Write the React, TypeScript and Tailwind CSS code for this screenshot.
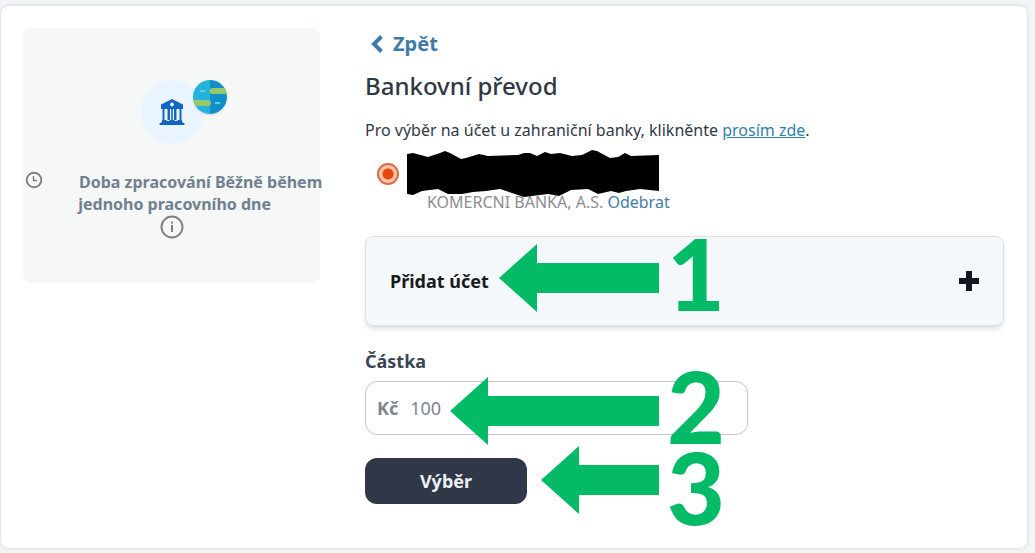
import { useState } from "react";

const Arrow = ({ width }: { width: number }) => (
  <svg width={width} height={68} viewBox={`0 0 ${width} 68`} fill="#03bb66" aria-hidden="true">
    <path d={`M0 34L38 0V19H${width}V49H38V68Z`} />
  </svg>
);

const Step = ({
  width,
  label,
  className,
  labelClassName = "-mt-2",
}: {
  width: number;
  label: string;
  className: string;
  labelClassName?: string;
}) => (
  <div className={`pointer-events-none absolute z-10 flex items-start ${className}`}>
    <Arrow width={width} />
    <span
      className={`pl-2 font-['Lato',sans-serif] text-[100px] leading-[72px] font-black text-[#03bb66] ${labelClassName}`}
    >
      {label}
    </span>
  </div>
);

const BankIcon = () => (
  <svg width="28" height="28" viewBox="0 0 28 28" fill="#1266bd" aria-hidden="true">
    <path
      fillRule="evenodd"
      d="M14 1L25 6.5V11H3V6.5ZM14 4.6a1.9 1.9 0 1 0 0 3.8a1.9 1.9 0 1 0 0-3.8Z"
    />
    <path d="M4.500 11h2v11h-2zM9.500 11h2.500v11h-2.500zM16 11h2.500v11h-2.500zM21.500 11h2v11h-2zM13.200 11h1.600v11h-1.600z" />
    <path d="M4 22h4l1 1h2l1-1h4l1 1h2l1-1h4v2l2.500 1.500V27H1.500v-1.500l2.500-1.500z" />
  </svg>
);

const GlobeIcon = () => (
  <svg width="34" height="34" viewBox="0 0 34 34" aria-hidden="true">
    <defs>
      <clipPath id="globe">
        <circle cx="17" cy="17" r="17" />
      </clipPath>
    </defs>
    <g clipPath="url(#globe)">
      <path fill="#25b3db" d="M0 0h17v34H0z" />
      <path fill="#128fc8" d="M17 0h17v34H17z" />
      <path fill="#93c96b" d="M19 8h15v6H20a3 3 0 0 1-1-6zM0 20h15a3 3 0 0 1 0 6H0z" />
      <path fill="#62cbe5" d="M7 10h5v2H7zM22 22h5v2h-5z" />
    </g>
  </svg>
);

const ClockIcon = () => (
  <svg width="18" height="18" viewBox="0 0 18 18" fill="none" stroke="#7d7f81" aria-hidden="true">
    <circle cx="9" cy="9" r="7.300" strokeWidth="1.900" />
    <path d="M8.500 5v4.500h3.500" strokeWidth="1.400" />
  </svg>
);

const InfoIcon = () => (
  <svg width="24" height="24" viewBox="0 0 24 24" fill="none" stroke="#7d7f81" aria-hidden="true">
    <circle cx="12" cy="12" r="10.500" strokeWidth="1.900" />
    <path d="M12 10v7M12 6.500v2" strokeWidth="2" />
  </svg>
);

const App = () => {
  const [amount, setAmount] = useState("100");

  return (
    <div className="min-h-screen bg-[#f2f4f5] pt-[6px] pr-2 pb-[5px] pl-px font-['Noto_Sans',sans-serif] text-[#303846]">
      <main className="flex items-start gap-[45px] rounded-lg bg-white pt-[22px] pr-[23px] pb-11 pl-[22px] shadow-[0_0_3px_1px_#dde1e2]">
        <aside className="flex h-[255px] w-[297px] shrink-0 flex-col items-center rounded-lg bg-[#f6f7f7] pt-[52px]">
          <div className="relative flex size-16 items-center justify-center rounded-full bg-[#eaf4ff]">
            <BankIcon />
            <span className="absolute top-0 left-[53px] rounded-full shadow-sm">
              <GlobeIcon />
            </span>
          </div>
          <div className="mt-[27px] flex w-full text-base leading-[22px] font-bold text-[#708090]">
            <span className="w-10 shrink-0 pl-[2px]">
              <ClockIcon />
            </span>
            <p className="-mr-10 flex-1 pr-11 text-center">
              <span className="pl-4 whitespace-nowrap">Doba zpracování Běžně během</span>
              <span className="block pr-9">jednoho pracovního dne</span>
            </p>
          </div>
          <button type="button" aria-label="Info">
            <InfoIcon />
          </button>
        </aside>

        <section className="flex min-w-0 flex-1 flex-col items-start">
          <a href="#" className="flex items-center gap-2 pl-1 text-xl leading-8 font-bold text-[#3d7aa8]">
            <svg width="16" height="20" viewBox="0 0 16 20" fill="none" aria-hidden="true">
              <path d="M12.500 2.500L5 10l7.500 7.500" stroke="currentColor" strokeWidth="4" />
            </svg>
            Zpět
          </a>
          <h1 className="mt-2 text-2xl leading-9 font-medium">Bankovní převod</h1>
          <p className="mt-[14px] text-base leading-6 whitespace-nowrap">
            Pro výběr na účet u zahraniční banky, klikněnte{" "}
            <a href="#" className="text-[#3180ad] underline">
              prosím zde
            </a>
            .
          </p>

          <div className="relative mt-1 flex h-14 items-center pl-3">
            <input
              type="radio"
              name="account"
              aria-label="KOMERCNI BANKA, A.S."
              defaultChecked
              className="size-[22px] appearance-none rounded-full border-2 border-[#dd6b4d] bg-[radial-gradient(circle,#ed4510_0_5px,#ffc6a2_6px)]"
            />
            <svg className="absolute left-[41px] z-10" width="254" height="48" viewBox="0 0 254 48" aria-hidden="true">
              <path d="M1 4L7 3 22 7 34 3 39 1 44 3 55 9 60 8 73 4 82 6 112 5 118 3 124 3 131 6 139 2 145 4 154 3 166 6 176 5 186 0 191 1 204 8 212 7 219 3 225 6 253 5V41L234 39 220 41 213 43 205 41 192 44 182 39 165 40 153 46 142 44 118 47 106 43 94 39 80 41 67 42 56 44 42 44 32 39 16 41 7 45 1 44Z" />
            </svg>
          </div>
          <p className="-mt-3 pl-[62px] text-base leading-6 text-[#8b8d91]">
            KOMERCNI BANKA, A.S.{" "}
            <a href="#" className="text-[#437da5]">
              Odebrat
            </a>
          </p>

          <div className="relative mt-[22px] w-full">
            <button
              type="button"
              className="flex h-[90px] w-full items-center justify-between rounded-lg border border-[#dfe1e5] bg-[#f5f8fa] px-6 text-lg font-bold text-[#171b22] shadow-md"
            >
              Přidat účet
              <svg width="20" height="20" viewBox="0 0 20 20" aria-hidden="true">
                <path d="M10 0v20M0 10h20" stroke="#141820" strokeWidth="6" />
              </svg>
            </button>
            <Step width={160} label="1" className="top-2 left-[134px]" />
          </div>

          <label htmlFor="amount" className="mt-[23px] text-lg leading-6 font-bold text-[#3a4554]">
            Částka
          </label>
          <div className="relative mt-2 w-[383px] max-w-full">
            <div className="flex h-[54px] items-center gap-3 rounded-xl border border-[#c3c5c8] px-[11px] text-lg text-[#7d8490]">
              <span className="font-bold">Kč</span>
              <input
                id="amount"
                value={amount}
                onChange={(e) => setAmount(e.target.value)}
                className="min-w-0 flex-1 outline-none"
              />
            </div>
            <Step width={209} label="2" className="-top-1 left-[85px]" />
          </div>

          <div className="relative mt-[23px]">
            <button
              type="button"
              className="h-[46px] w-[162px] rounded-xl bg-[#303746] text-lg font-bold text-[#edf0f5]"
            >
              Výběr
            </button>
            <Step width={118} label="3" className="-top-3 left-[176px]" labelClassName="mt-1" />
          </div>
        </section>
      </main>
    </div>
  );
};

export default App;
